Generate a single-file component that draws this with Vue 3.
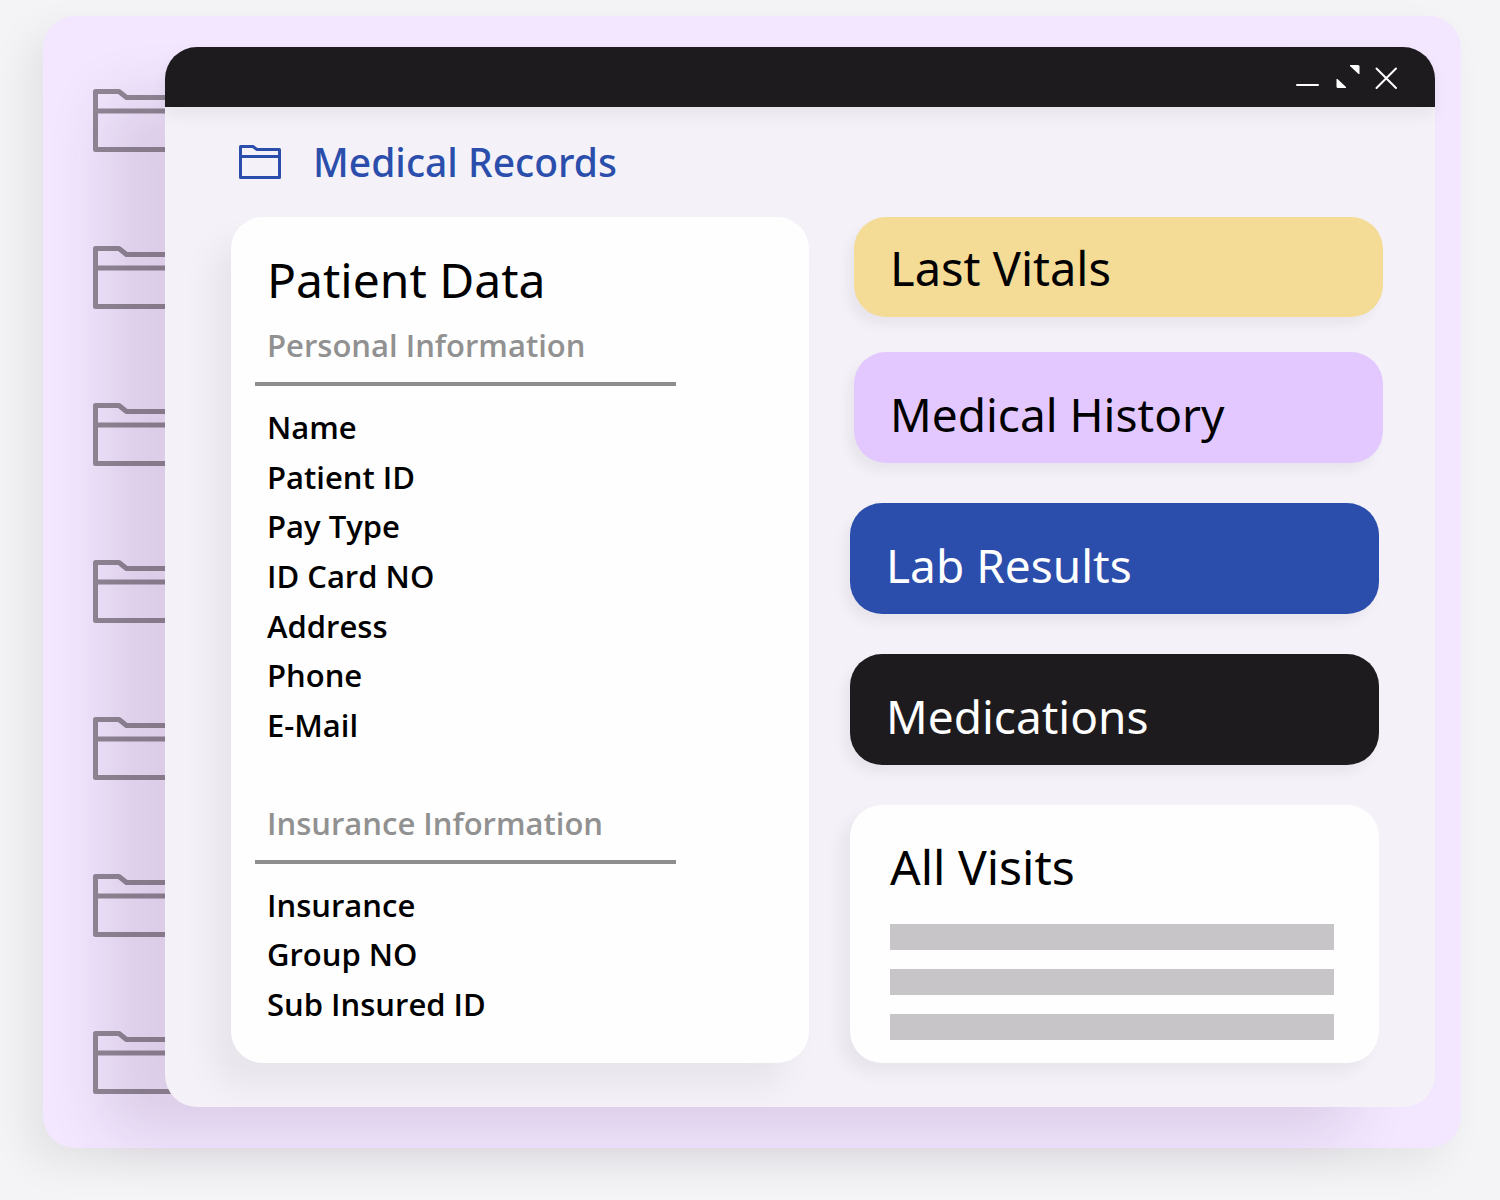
<script setup>
const folders = 7
const personalFields = ['Name', 'Patient ID', 'Pay Type', 'ID Card NO', 'Address', 'Phone', 'E-Mail']
const insuranceFields = ['Insurance', 'Group NO', 'Sub Insured ID']
</script>

<template>
  <div class="desktop">
    <div class="panel">
      <aside class="rail" aria-label="Folders">
        <svg v-for="n in folders" :key="n" class="rail-folder" viewBox="0 0 86 63" aria-hidden="true">
          <path d="M2.5 2.5H26L33.500 8.500H83.500V60.500H2.500Z M2.500 22H83.500" />
        </svg>
      </aside>

      <main class="window">
        <header class="titlebar">
          <button class="control" type="button" aria-label="Minimize">
            <svg viewBox="0 0 24 24"><path class="line" d="M-1 20H20" /></svg>
          </button>
          <button class="control" type="button" aria-label="Expand">
            <svg viewBox="0 0 24 24">
              <path class="solid" d="M14 0H22Q23.500 0 23.500 1.500V9H22.500L14 1Z" />
              <path class="solid" d="M0.500 14H1.500L10 22V23H2Q0.500 23 0.500 21.500Z" />
            </svg>
          </button>
          <button class="control" type="button" aria-label="Close">
            <svg viewBox="0 0 24 24"><path class="line" d="M2.500 3.500L22 23M22 3.500L2.500 23" /></svg>
          </button>
        </header>

        <div class="body">
          <div class="heading">
            <svg class="heading-icon" viewBox="0 0 42 34" aria-hidden="true">
              <path d="M1.500 1.500H14L18 4.500H40.500V32.500H1.500Z M1.500 11.500H40.500" />
            </svg>
            <h1>Medical Records</h1>
          </div>

          <div class="columns">
            <section class="card patient">
              <h2>Patient Data</h2>
              <h3>Personal Information</h3>
              <ul class="personal">
                <li v-for="field in personalFields" :key="field">{{ field }}</li>
              </ul>
              <h3>Insurance Information</h3>
              <ul class="insurance">
                <li v-for="field in insuranceFields" :key="field">{{ field }}</li>
              </ul>
            </section>

            <div class="side">
              <div class="group upper">
                <button class="tile vitals" type="button">Last Vitals</button>
                <button class="tile history" type="button">Medical History</button>
              </div>
              <div class="group lower">
                <button class="tile labs" type="button">Lab Results</button>
                <button class="tile meds" type="button">Medications</button>
                <section class="card visits">
                  <h2>All Visits</h2>
                  <div class="bar"></div>
                  <div class="bar"></div>
                  <div class="bar"></div>
                </section>
              </div>
            </div>
          </div>
        </div>
      </main>
    </div>
  </div>
</template>

<style>
body {
  background: #f4f3f6;
}
</style>

<style scoped>
.desktop {
  padding: 16px 39px 52px 43px;
  font-family: "Noto Sans", "Open Sans", sans-serif;
  color: #000;
}

h1, h2, h3, ul {
  margin: 0;
  padding: 0;
}

.panel {
  display: flex;
  padding: 31px 26px 41px 50px;
  border-radius: 32px;
  background: #f3e7ff;
  box-shadow: -16px 16px 40px rgba(0, 0, 0, 0.07);
}

.rail {
  flex: 0 0 72px;
  min-width: 0;
  width: 72px;
  display: flex;
  flex-direction: column;
  justify-content: space-between;
  padding: 42px 0 13px;
}

.rail-folder {
  width: 86px;
  height: 63px;
  fill: none;
  stroke: #918896;
  stroke-width: 5;
  stroke-linejoin: round;
}

.window {
  position: relative;
  flex: 1;
  min-width: 0;
  border-radius: 32px;
  background: #f4f2f8;
  box-shadow: -72px 38px 60px -12px rgba(50, 20, 60, 0.12);
}

.titlebar {
  display: flex;
  align-items: center;
  justify-content: flex-end;
  gap: 14px;
  height: 60px;
  box-sizing: border-box;
  padding: 0 37px 0 0;
  border-radius: 32px 32px 0 0;
  background: #1e1b1e;
  box-shadow: 0 8px 16px rgba(0, 0, 0, 0.06);
}

.control {
  width: 24px;
  height: 24px;
  padding: 0;
  border: 0;
  background: none;
}

.control svg {
  display: block;
  width: 24px;
  height: 24px;
  overflow: visible;
}

.line {
  fill: none;
  stroke: #fff;
  stroke-width: 2;
  stroke-linecap: round;
}

.solid {
  fill: #fff;
}

.body {
  padding: 28px 52px 44px 66px;
}

.heading {
  display: flex;
  align-items: center;
  gap: 32px;
  height: 54px;
  padding-left: 8px;
  margin-bottom: 28px;
  color: #2b4eac;
}

.heading-icon {
  width: 42px;
  height: 34px;
  fill: none;
  stroke: currentColor;
  stroke-width: 3;
  stroke-linejoin: round;
}

h1 {
  font-size: 39px;
  line-height: 54px;
  font-weight: 500;
}

.columns {
  display: grid;
  grid-template-columns: minmax(0, 578fr) minmax(0, 533fr);
  gap: 41px;
}

.card {
  box-sizing: border-box;
  border-radius: 32px;
  background: #fefefe;
}

.patient {
  padding: 31px 24px 32px;
  box-shadow: -20px 24px 32px rgba(0, 0, 0, 0.05);
}

h2 {
  font-size: 48px;
  line-height: 64px;
  font-weight: 400;
}

.patient h2 {
  padding-left: 12px;
}

h3 {
  width: 421px;
  max-width: 100%;
  box-sizing: border-box;
  padding: 8px 12px 12px;
  border-bottom: 4px solid #8e8e8e;
  color: #919191;
  font-family: "Open Sans", "Noto Sans", sans-serif;
  font-size: 31px;
  line-height: 50px;
  font-weight: 600;
}

ul {
  display: grid;
  grid-auto-rows: 1fr;
  align-items: center;
  padding: 0 12px;
  list-style: none;
  font-family: "Open Sans", "Noto Sans", sans-serif;
  font-size: 31px;
  line-height: 48px;
  font-weight: 600;
}

.personal {
  height: 348px;
  margin: 16px 0 40px;
}

.insurance {
  height: 149px;
  margin-top: 16px;
}

.side {
  display: flex;
  flex-direction: column;
  gap: 40px;
}

.group {
  display: flex;
  flex-direction: column;
}

.upper {
  gap: 35px;
  padding-left: 4px;
}

.lower {
  gap: 40px;
  padding-right: 4px;
}

.tile {
  height: 111px;
  padding: 12px 36px 0;
  border: 0;
  border-radius: 32px;
  font: 400 46px/64px "Noto Sans", "Open Sans", sans-serif;
  text-align: left;
  color: #fff;
  box-shadow: -6px 8px 12px rgba(0, 0, 0, 0.05);
}

.vitals {
  height: 100px;
  padding-top: 2px;
  background: #f4db96;
  color: #000;
  font-size: 47px;
}

.history {
  background: #e2c8ff;
  color: #000;
}

.labs {
  background: #2b4eac;
}

.meds {
  background: #1e1b1e;
}

.visits {
  display: flex;
  flex-direction: column;
  gap: 19px;
  padding: 30px 45px 23px 40px;
  box-shadow: -10px 10px 16px rgba(0, 0, 0, 0.05);
}

.visits h2 {
  margin-bottom: 6px;
}

.bar {
  height: 26px;
  background: #c7c5c8;
}
</style>
